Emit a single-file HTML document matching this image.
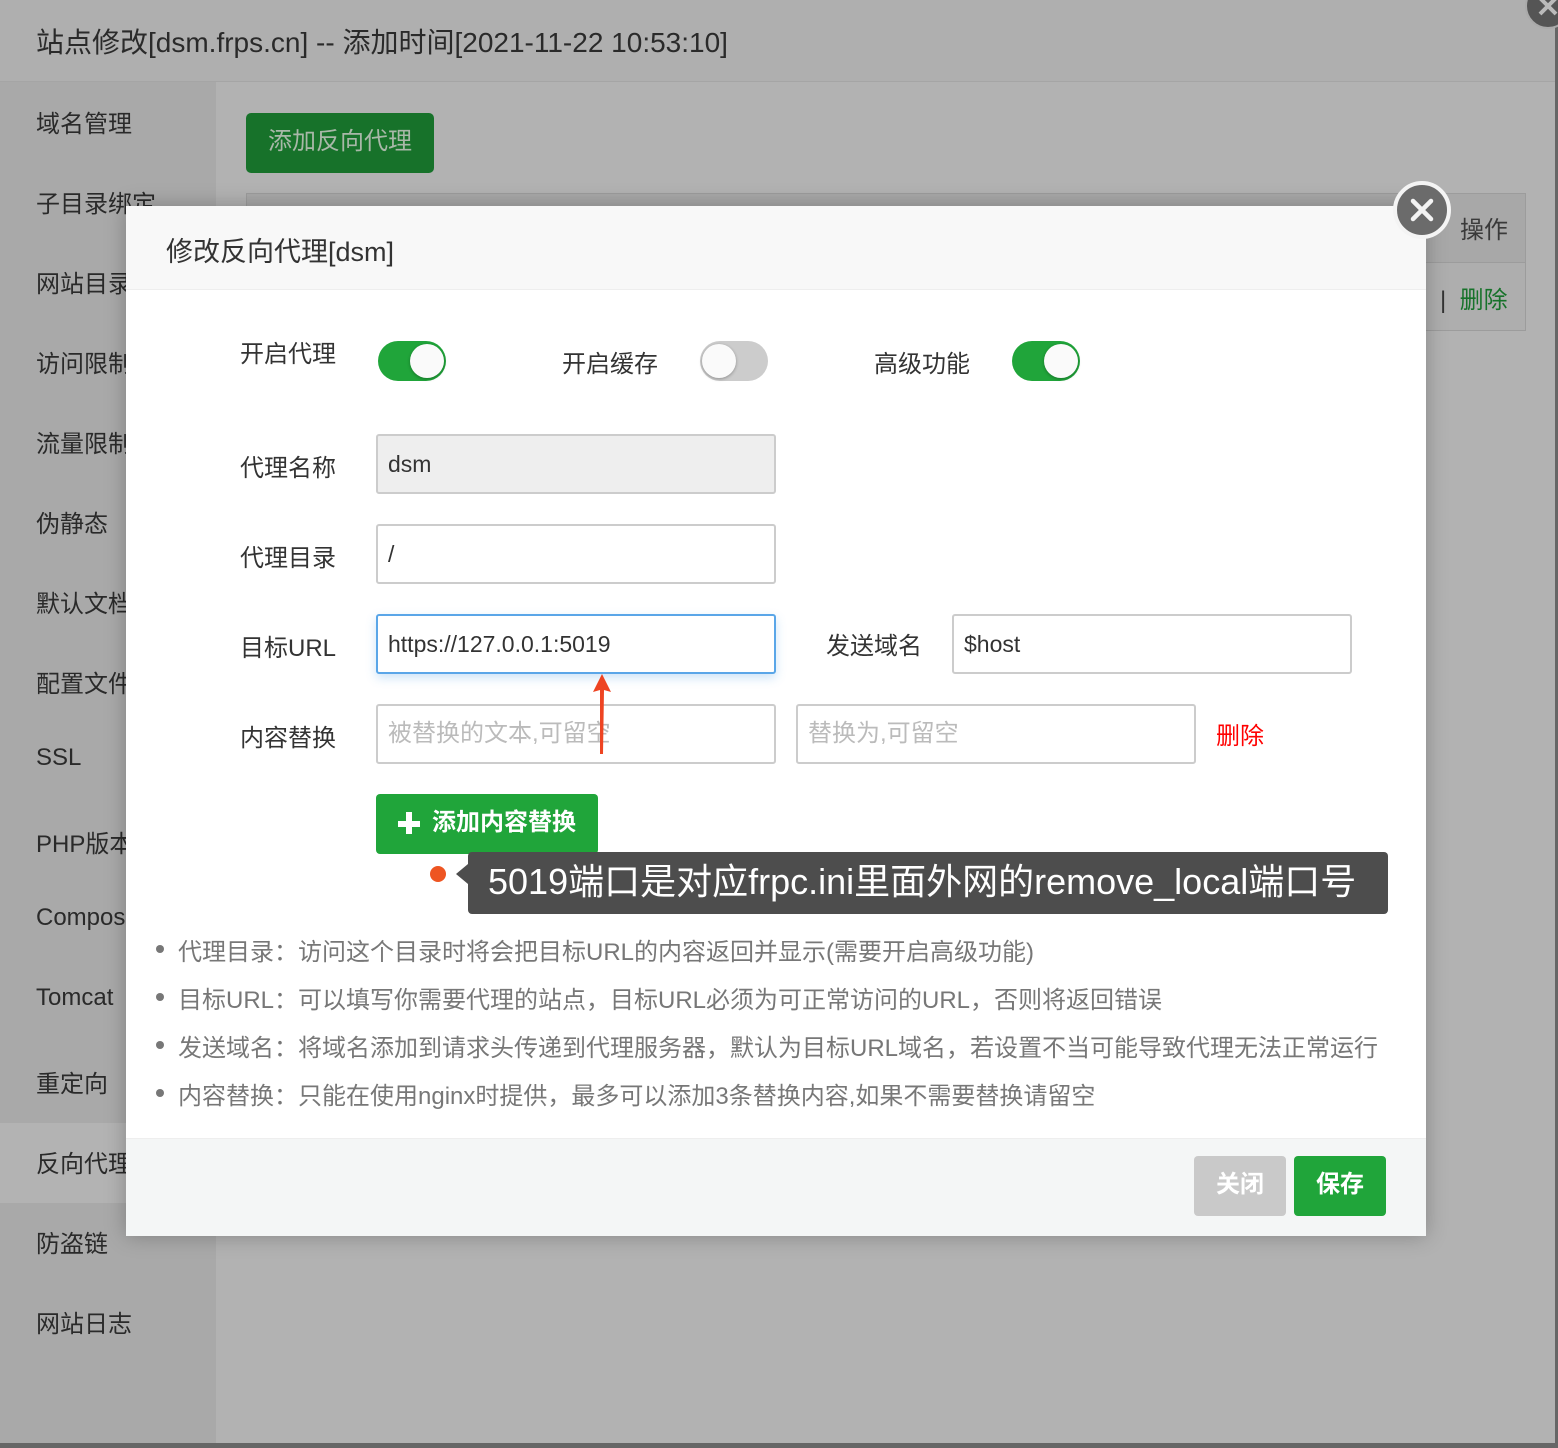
<!DOCTYPE html>
<html><head><meta charset="utf-8"><style>
*{margin:0;padding:0;box-sizing:border-box}
body{width:1558px;height:1448px;position:relative;overflow:hidden;background:#b2b2b2;font-family:"Liberation Sans","Noto Sans CJK SC",sans-serif;color:#333}
.abs{position:absolute}
.top{left:0;top:0;width:1558px;height:82px;background:#afafaf;border-bottom:1px solid #a5a5a5}
.top span{position:absolute;left:36px;top:21px;font-size:28px;color:#2a2a2a;white-space:nowrap}
.side{left:0;top:82px;width:216px;height:1366px;background:#a9a9a9}
.side div{position:absolute;left:36px;font-size:24px;color:#2a2a2a;white-space:nowrap}
.modal{left:126px;top:206px;width:1300px;height:1030px;background:#fff;box-shadow:0 0 20px rgba(0,0,0,.25)}
.mh{left:0;top:0;width:1300px;height:84px;background:#f8f8f8;border-bottom:1px solid #eee}
.lbl{font-size:24px;color:#333;white-space:nowrap}
.inp{border:2px solid #ccc;border-radius:3px;height:60px;background:#fff;font-size:23px;padding:0 10px;line-height:56px;color:#333;white-space:nowrap;overflow:hidden}
.tg{width:68px;height:40px;border-radius:20px}
.tg i{position:absolute;top:3px;width:34px;height:34px;border-radius:50%;background:#fafafa;box-shadow:0 1px 3px rgba(0,0,0,.3)}
.tip li{font-size:24px;color:#777;list-style:none;position:relative;padding-left:22px;height:48px;white-space:nowrap}
.tip li:before{content:"";position:absolute;left:0;top:13px;width:8px;height:8px;border-radius:50%;background:#777}
</style></head><body>
<div class="abs top"><span>站点修改[dsm.frps.cn] -- 添加时间[2021-11-22 10:53:10]</span></div>
<div class="abs side">
<div style="left:0;top:1041px;width:216px;height:80px;background:#b3b3b3"></div>
<div style="top:22px">域名管理</div><div style="top:102px">子目录绑定</div><div style="top:182px">网站目录</div><div style="top:262px">访问限制</div><div style="top:342px">流量限制</div><div style="top:422px">伪静态</div><div style="top:502px">默认文档</div><div style="top:582px">配置文件</div><div style="top:662px">SSL</div><div style="top:742px">PHP版本</div><div style="top:822px">Composer</div><div style="top:902px">Tomcat</div><div style="top:982px">重定向</div><div style="top:1062px">反向代理</div><div style="top:1142px">防盗链</div><div style="top:1222px">网站日志</div>
</div>
<div class="abs" style="left:246px;top:113px;width:188px;height:60px;background:#17722a;border-radius:5px;color:#a8b8a8;font-size:24px;text-align:center;line-height:58px">添加反向代理</div>
<div class="abs" style="left:246px;top:193px;width:1280px;height:138px;border:1px solid #9c9c9c;background:#aeaeae"></div>
<div class="abs" style="left:246px;top:193px;width:1280px;height:70px;border:1px solid #9c9c9c;background:#a8a8a8"></div>
<div class="abs" style="left:1460px;top:210px;font-size:24px;color:#3a3a3a">操作</div>
<div class="abs" style="left:1440px;top:280px;font-size:24px;color:#333">|&nbsp; <span style="color:#17722a">删除</span></div>
<div class="abs" style="left:1555px;top:20px;width:3px;height:1428px;background:#666"></div>
<div class="abs" style="left:0;top:1443px;width:1558px;height:5px;background:#666"></div>
<svg class="abs" style="left:1524px;top:-18px" width="48" height="48"><circle cx="24" cy="24" r="22" fill="#555" stroke="#aaa" stroke-width="2"/><path d="M16 16L32 32M32 16L16 32" stroke="#bbb" stroke-width="4"/></svg>

<div class="abs modal">
<div class="abs mh"><span class="abs" style="left:40px;top:24px;font-size:27px;color:#333">修改反向代理[dsm]</span></div>
<div class="abs lbl" style="left:114px;top:128px">开启代理</div>
<div class="abs tg" style="left:252px;top:135px;background:#20a53a"><i style="left:32px"></i></div>
<div class="abs lbl" style="left:436px;top:138px">开启缓存</div>
<div class="abs tg" style="left:574px;top:135px;background:#ccc"><i style="left:2px"></i></div>
<div class="abs lbl" style="left:748px;top:138px">高级功能</div>
<div class="abs tg" style="left:886px;top:135px;background:#20a53a"><i style="left:32px"></i></div>

<div class="abs lbl" style="left:114px;top:242px">代理名称</div>
<div class="abs inp" style="left:250px;top:228px;width:400px;background:#eee">dsm</div>
<div class="abs lbl" style="left:114px;top:332px">代理目录</div>
<div class="abs inp" style="left:250px;top:318px;width:400px">/</div>
<div class="abs lbl" style="left:114px;top:422px">目标URL</div>
<div class="abs inp" style="left:250px;top:408px;width:400px;border-color:#5aa6e8;box-shadow:0 4px 10px rgba(90,166,232,.3)">https://127.0.0.1:5019</div>
<div class="abs lbl" style="left:700px;top:420px">发送域名</div>
<div class="abs inp" style="left:826px;top:408px;width:400px">$host</div>
<div class="abs lbl" style="left:114px;top:512px">内容替换</div>
<div class="abs inp" style="left:250px;top:498px;width:400px;color:#bbb;font-size:24px">被替换的文本,可留空</div>
<div class="abs inp" style="left:670px;top:498px;width:400px;color:#bbb;font-size:24px">替换为,可留空</div>
<div class="abs lbl" style="left:1090px;top:510px;color:#f00">删除</div>
<svg class="abs" style="left:464px;top:466px" width="24" height="84"><path d="M12 2L21 20L14 18L13 82L10 82L10 18L3 20Z" fill="#ee4422"/></svg>
<div class="abs" style="left:250px;top:588px;width:222px;height:60px;background:#20a53a;border-radius:4px;color:#fff;font-size:24px;line-height:58px;padding-left:56px;font-weight:600;white-space:nowrap">添加内容替换</div>
<div class="abs" style="left:272px;top:615px;width:22px;height:6px;background:#fff"></div>
<div class="abs" style="left:280px;top:606px;width:6px;height:22px;background:#fff"></div>
<div class="abs" style="left:304px;top:660px;width:16px;height:16px;border-radius:50%;background:#ee5522"></div>
<div class="abs" style="left:330px;top:658px;width:0;height:0;border-top:10px solid transparent;border-bottom:10px solid transparent;border-right:12px solid #4d4d4d"></div>
<div class="abs" style="left:342px;top:646px;width:920px;height:62px;background:#4d4d4d;border-radius:4px;color:#fff;font-size:36px;line-height:60px;padding-left:20px;white-space:nowrap">5019端口是对应frpc.ini里面外网的remove_local端口号</div>
<ul class="abs tip" style="left:30px;top:726px">
<li>代理目录：访问这个目录时将会把目标URL的内容返回并显示(需要开启高级功能)</li>
<li>目标URL：可以填写你需要代理的站点，目标URL必须为可正常访问的URL，否则将返回错误</li>
<li>发送域名：将域名添加到请求头传递到代理服务器，默认为目标URL域名，若设置不当可能导致代理无法正常运行</li>
<li>内容替换：只能在使用nginx时提供，最多可以添加3条替换内容,如果不需要替换请留空</li>
</ul>
<div class="abs" style="left:0;top:932px;width:1300px;height:98px;background:#f4f6f6;border-top:1px solid #eee"></div>
<div class="abs" style="left:1068px;top:950px;width:92px;height:60px;background:#c9c9c9;border-radius:4px;color:#fff;font-size:24px;text-align:center;line-height:58px;font-weight:600">关闭</div>
<div class="abs" style="left:1168px;top:950px;width:92px;height:60px;background:#20a53a;border-radius:4px;color:#fff;font-size:24px;text-align:center;line-height:58px;font-weight:600">保存</div>
</div>
<svg class="abs" style="left:1392px;top:180px" width="60" height="60"><circle cx="30" cy="30" r="27" fill="#6b6b6b" stroke="#f4f4f4" stroke-width="4"/><path d="M21 21L39 39M39 21L21 39" stroke="#f4f4f4" stroke-width="4.5" stroke-linecap="round"/></svg>
</body></html>
